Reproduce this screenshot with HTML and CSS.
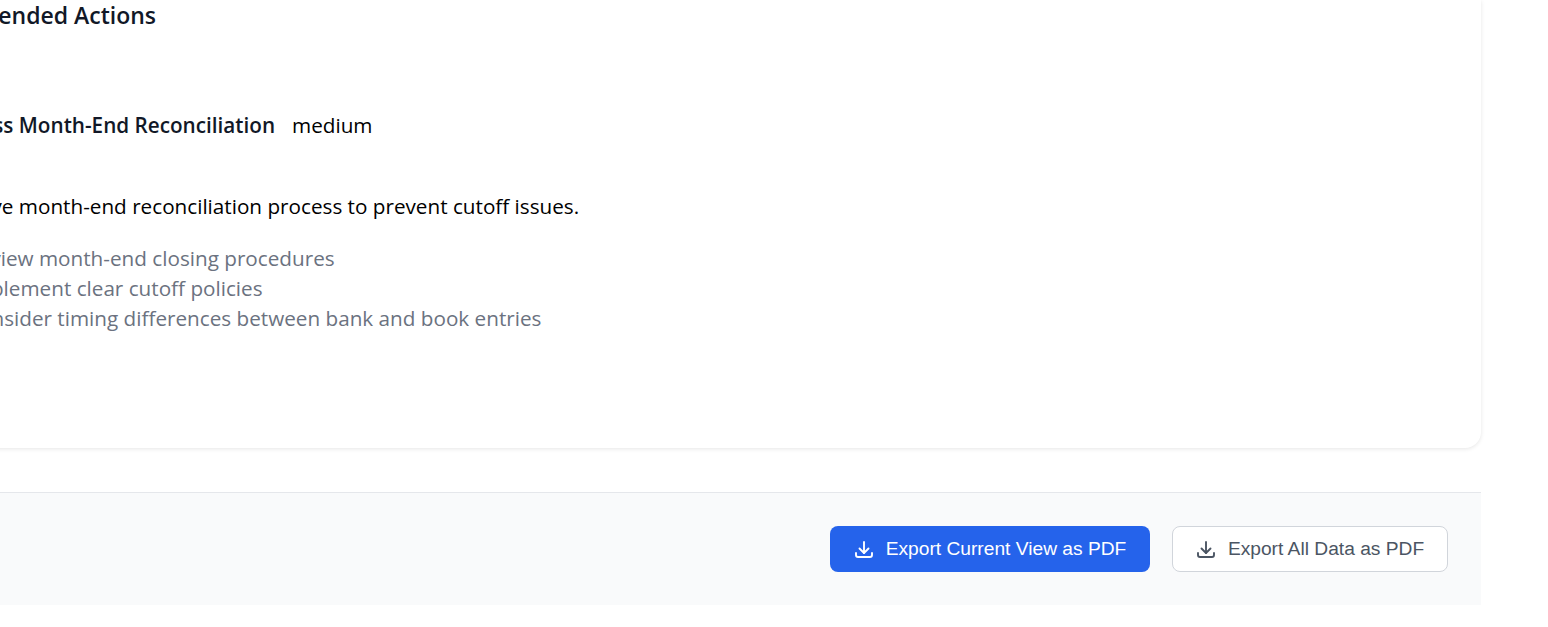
FILE: index.html
```html
<!DOCTYPE html>
<html lang="en">

<head>
  <meta charset="UTF-8" />
  <meta name="viewport" content="width=device-width, initial-scale=1.0" />
  <title>Report</title>
  <link rel="stylesheet" href="styles.css">
</head>

<body>
  <div class="modal">
    <div class="card">
      <h3 class="section-title">Recommended Actions</h3>
      <div class="action">
        <div class="action-head">
          <span class="action-title">Address Month-End Reconciliation</span>
          <span class="action-level">medium</span>
        </div>
        <p class="action-desc">Improve month-end reconciliation process to prevent cutoff issues.</p>
        <ul class="steps">
          <li>Review month-end closing procedures</li>
          <li>Implement clear cutoff policies</li>
          <li>Consider timing differences between bank and book entries</li>
        </ul>
      </div>
    </div>
    <div class="footer">
      <button class="btn primary">
        <svg class="btn-icon" viewBox="0 0 24 24"><path d="M4 16v2a2 2 0 0 0 2 2h12a2 2 0 0 0 2-2v-2" /><path d="M7.5 11.5l4.5 4.5 4.5-4.5" /><path d="M12 5v11" /></svg>
        Export Current View as PDF
      </button>
      <button class="btn secondary">
        <svg class="btn-icon" viewBox="0 0 24 24"><path d="M4 16v2a2 2 0 0 0 2 2h12a2 2 0 0 0 2-2v-2" /><path d="M7.5 11.5l4.5 4.5 4.5-4.5" /><path d="M12 5v11" /></svg>
        Export All Data as PDF
      </button>
    </div>
  </div>
</body>

</html>
```

FILE: styles.css
```css
html,
body {
  margin: 0;
  padding: 0;
  background: #fff;
  overflow: hidden;
}

body {
  height: 627px;
  font-family: "Open Sans", "Noto Sans", sans-serif;
  color: #000;
}

/* the view is scrolled sideways, so the left part of the page is cut off */
.modal {
  width: 1681px;
  margin-left: -200px;
}

.card {
  height: 448px;
  box-sizing: border-box;
  background: #fff;
  border-radius: 0 0 16px 16px;
  box-shadow: 0 1px 4px rgba(0, 0, 0, 0.1);
  margin-bottom: 44px;
  padding-left: 101px;
}

.section-title {
  margin: 0;
  font-size: 23px;
  line-height: 30px;
  font-weight: 600;
  color: #111827;
}

.action {
  padding: 80px 0 0 32px;
}

.action-head {
  display: flex;
  gap: 17px;
  line-height: 30px;
  font-size: 20.7px;
}

.action-title {
  font-weight: 600;
  color: #111827;
}

.action-desc {
  margin: 51px 0 0;
  font-size: 20.7px;
  line-height: 30px;
}

.steps {
  margin: 22px 0 0;
  padding: 0 0 0 33px;
  list-style: none;
  font-size: 20.7px;
  line-height: 30px;
  color: #6b7280;
}

.footer {
  display: flex;
  justify-content: flex-end;
  gap: 22px;
  padding: 33px;
  background: #f9fafb;
  border-top: 1px solid #e5e7eb;
}

.btn {
  display: flex;
  align-items: center;
  justify-content: center;
  gap: 10px;
  height: 46px;
  box-sizing: border-box;
  padding: 0 2px 0 0;
  border-radius: 8px;
  font-family: "Liberation Sans", Arial, sans-serif;
  font-size: 19.2px;
}

.btn-icon {
  width: 24px;
  height: 24px;
  fill: none;
  stroke: currentColor;
  stroke-width: 1.9;
  stroke-linecap: round;
  stroke-linejoin: round;
}

.primary {
  width: 320px;
  border: none;
  background: #2563eb;
  color: #fff;
}

.secondary {
  width: 276px;
  border: 1px solid #d1d5db;
  background: #fff;
  color: #4b5563;
}
```
